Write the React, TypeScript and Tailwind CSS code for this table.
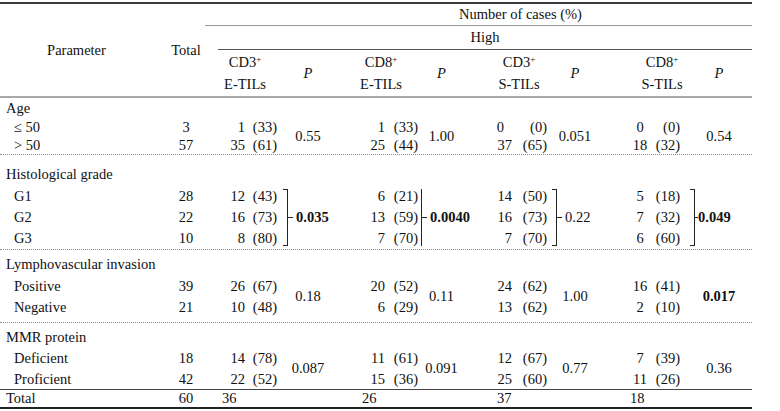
import React from 'react';

type Pair = [string, string, string?];

interface SubRow {
  label: string;
  total: string;
  vals: Pair[];
}

const GRID =
  'grid grid-cols-[165px_42px_38px_38px_50px_52px_36px_41px_50px_40px_46px_48px_40px_66px]';

const pctPad = ['pr-[6px]', 'pr-[3px]', 'pr-[5px]', 'pr-[6px]'];
const cntAlign = ['justify-end', 'justify-end', 'justify-end', 'justify-center pl-[36px]'];

// plain P value, centred over the rows it covers
function PCell({ value, bold }: { value: string; bold?: boolean }) {
  return (
    <div className={`row-span-2 flex items-center justify-center ${bold ? 'font-bold' : ''}`}>{value}</div>
  );
}

// bracketed P value for the three histological grades
function BracketCell({
  value,
  bold,
  shift,
  tight,
}: {
  value: string;
  bold?: boolean;
  shift: string;
  tight?: boolean;
}) {
  return (
    <div className={`row-span-3 flex items-stretch pt-[4px] pb-[3px] whitespace-nowrap ${shift}`}>
      <div className="w-[5px] border-y-[1.5px] border-r-[1.5px] border-[#222]" />
      <div className="flex items-center">
        <div className={`${tight ? 'w-[3px]' : 'w-[5px]'} h-[1.5px] bg-[#222]`} />
        <span className={`${tight ? 'ml-0' : 'ml-[3px]'} ${bold ? 'font-bold' : ''}`}>{value}</span>
      </div>
    </div>
  );
}

function Values({ row, p }: { row: SubRow; p?: React.ReactNode[] }) {
  return (
    <>
      <div className="pl-[14px] flex items-center">{row.label}</div>
      <div className="flex items-center justify-center">{row.total}</div>
      {row.vals.map((v, i) => (
        <React.Fragment key={i}>
          <div className={`flex items-center ${cntAlign[i]} ${v[2] ?? ''}`}>{v[0]}</div>
          <div className={`flex items-center justify-end ${pctPad[i]}`}>{v[1]}</div>
          {p ? p[i] : null}
        </React.Fragment>
      ))}
    </>
  );
}

function Head({ top, bottom, pad }: { top: string; bottom: string; pad: string }) {
  return (
    <div className={`col-span-2 flex flex-col items-center justify-center gap-[8px] whitespace-nowrap ${pad}`}>
      <span>
        {top}
        <sup className="text-[9px]">+</sup>
      </span>
      <span>{bottom}</span>
    </div>
  );
}

const Dotted = () => <div className="w-[752px] border-t border-dotted border-[#8a8a8a]" />;

export default function App() {
  const age: SubRow[] = [
    { label: '≤ 50', total: '3', vals: [['1', '(33)'], ['1', '(33)'], ['0', '(0)', 'pr-[8px]'], ['0', '(0)']] },
    { label: '> 50', total: '57', vals: [['35', '(61)'], ['25', '(44)'], ['37', '(65)'], ['18', '(32)']] },
  ];
  const grade: SubRow[] = [
    { label: 'G1', total: '28', vals: [['12', '(43)'], ['6', '(21)'], ['14', '(50)'], ['5', '(18)']] },
    { label: 'G2', total: '22', vals: [['16', '(73)'], ['13', '(59)'], ['16', '(73)'], ['7', '(32)']] },
    { label: 'G3', total: '10', vals: [['8', '(80)'], ['7', '(70)'], ['7', '(70)'], ['6', '(60)']] },
  ];
  const lvi: SubRow[] = [
    { label: 'Positive', total: '39', vals: [['26', '(67)'], ['20', '(52)'], ['24', '(62)'], ['16', '(41)']] },
    { label: 'Negative', total: '21', vals: [['10', '(48)'], ['6', '(29)'], ['13', '(62)'], ['2', '(10)']] },
  ];
  const mmr: SubRow[] = [
    { label: 'Deficient', total: '18', vals: [['14', '(78)'], ['11', '(61)'], ['12', '(67)'], ['7', '(39)']] },
    { label: 'Proficient', total: '42', vals: [['22', '(52)'], ['15', '(36)'], ['25', '(60)'], ['11', '(26)']] },
  ];

  return (
    <div className="w-[780px] h-[411px] bg-white text-[#111] text-[14.5px] leading-none font-['Liberation_Serif','Times_New_Roman',serif] pt-[2px]">
      <div className="w-[752px]">
        {/* header */}
        <div className={`${GRID} grid-rows-[22px_24px_46px] border-t-2 border-[#3a3a3a]`}>
          <div className="row-span-3 flex items-center justify-center pr-[12px]">Parameter</div>
          <div className="row-span-3 flex items-center justify-center">Total</div>
          <div className="col-span-12 -ml-[2px] pl-[84px] flex items-center justify-center border-b border-[#9a9a9a]">
            Number of cases (%)
          </div>
          <div className="col-span-12 ml-[11px] flex items-center justify-center border-b border-[#555]">High</div>
          <Head top="CD3" bottom="E-TILs" pad="" />
          <div className="flex items-center justify-center italic">P</div>
          <Head top="CD8" bottom="E-TILs" pad="pl-[8px]" />
          <div className="flex items-center justify-center italic">P</div>
          <Head top="CD3" bottom="S-TILs" pad="pl-[24px]" />
          <div className="flex items-center justify-center italic">P</div>
          <Head top="CD8" bottom="S-TILs" pad="pl-[40px]" />
          <div className="flex items-center justify-center italic">P</div>
        </div>
        <div className="h-[2px] bg-[#a8a8a8]" />

        {/* Age */}
        <div className={`${GRID} grid-rows-[20px_19px_17px]`}>
          <div className="col-span-14 pl-[6px] flex items-center">Age</div>
          <Values
            row={age[0]}
            p={[
              <PCell key="a" value="0.55" />,
              <PCell key="b" value="1.00" />,
              <PCell key="c" value="0.051" />,
              <PCell key="d" value="0.54" />,
            ]}
          />
          <Values row={age[1]} />
        </div>
        <Dotted />

        {/* Histological grade */}
        <div className={`${GRID} grid-rows-[22px_22px_21px_21px] pt-[8px]`}>
          <div className="col-span-14 pl-[6px] flex items-center">Histological grade</div>
          <Values
            row={grade[0]}
            p={[
              <BracketCell key="a" value="0.035" bold shift="" />,
              <BracketCell key="b" value="0.0040" bold shift="" />,
              <BracketCell key="c" value="0.22" shift="" />,
              <BracketCell key="d" value="0.049" bold shift="ml-[4px]" tight />,
            ]}
          />
          <Values row={grade[1]} />
          <Values row={grade[2]} />
        </div>
        <Dotted />

        {/* Lymphovascular invasion */}
        <div className={`${GRID} grid-rows-[22px_22px_21px] pt-[3px] pb-[4px]`}>
          <div className="col-span-14 pl-[6px] flex items-center">Lymphovascular invasion</div>
          <Values
            row={lvi[0]}
            p={[
              <PCell key="a" value="0.18" />,
              <PCell key="b" value="0.11" />,
              <PCell key="c" value="1.00" />,
              <PCell key="d" value="0.017" bold />,
            ]}
          />
          <Values row={lvi[1]} />
        </div>
        <Dotted />

        {/* MMR protein */}
        <div className={`${GRID} grid-rows-[21px_21px_20px] pt-[4px]`}>
          <div className="col-span-14 pl-[6px] flex items-center">MMR protein</div>
          <Values
            row={mmr[0]}
            p={[
              <PCell key="a" value="0.087" />,
              <PCell key="b" value="0.091" />,
              <PCell key="c" value="0.77" />,
              <PCell key="d" value="0.36" />,
            ]}
          />
          <Values row={mmr[1]} />
        </div>

        {/* Total */}
        <div className={`${GRID} h-[20px] border-t border-[#444] border-b-2 border-b-[#222]`}>
          <div className="pl-[6px] flex items-center">Total</div>
          <div className="flex items-center justify-center">60</div>
          <div className="col-span-2 pl-[15px] flex items-center">36</div>
          <div />
          <div className="col-span-2 pl-[29px] flex items-center">26</div>
          <div />
          <div className="col-span-2 pl-[35px] flex items-center">37</div>
          <div />
          <div className="col-span-2 pl-[32px] flex items-center">18</div>
          <div />
        </div>
      </div>
    </div>
  );
}
